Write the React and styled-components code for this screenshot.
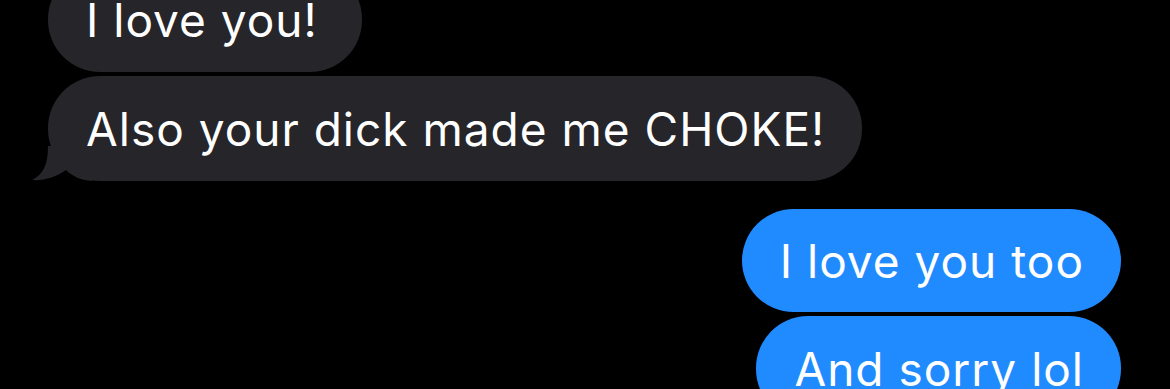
import React from 'react'
import styled, { createGlobalStyle } from 'styled-components'

const GlobalStyle = createGlobalStyle`
  html, body {
    margin: 0;
    padding: 0;
    background: #000;
    overflow: hidden;
  }
`

const Thread = styled.div`
  width: 1170px;
  height: 389px;
  overflow: hidden;
  background: #000;
`

const Column = styled.div`
  display: flex;
  flex-direction: column;
  margin-top: -33px;
  padding: 0 49px 0 48px;
`

const Row = styled.div`
  display: flex;
  justify-content: ${p => (p.$mine ? 'flex-end' : 'flex-start')};
  margin-top: ${p => p.$gap || 0}px;
`

const Bubble = styled.div`
  position: relative;
  box-sizing: border-box;
  height: ${p => p.$h || 105}px;
  display: flex;
  align-items: center;
  padding: 0 ${p => p.$padRight || 37}px 0 38px;
  border-radius: 52px;
  background: ${p => (p.$mine ? '#1f8bff' : '#262529')};
  color: #fff;
  font-family: "Inter", "Liberation Sans", sans-serif;
  font-size: 46px;
  letter-spacing: 1px;
  white-space: nowrap;
`

const Text = styled.span`
  position: relative;
`

const Tail = styled.svg`
  position: absolute;
  left: -16px;
  bottom: 0;
  width: 60px;
  height: 35px;
`

const messages = [
  { id: 1, text: 'I love you!', padRight: 44 },
  { id: 2, text: 'Also your dick made me CHOKE!', tail: true, gap: 4 },
  { id: 3, text: 'I love you too', mine: true, gap: 28, h: 103 },
  { id: 4, text: 'And sorry lol', mine: true, gap: 4 },
]

const App = () => {
  return (
    <>
      <GlobalStyle />
      <Thread>
        <Column>
          {messages.map(m => (
            <Row key={m.id} $mine={m.mine} $gap={m.gap}>
              <Bubble $mine={m.mine} $padRight={m.padRight} $h={m.h}>
                {m.tail && (
                  <Tail viewBox="0 0 60 35">
                    <path
                      d="M16 0 C16 18 12 28 0 34 C12 35 24 31 34 24 C40 30 48 34 60 35 L60 0 Z"
                      fill="#262529"
                    />
                  </Tail>
                )}
                <Text>{m.text}</Text>
              </Bubble>
            </Row>
          ))}
        </Column>
      </Thread>
    </>
  )
}

export default App
